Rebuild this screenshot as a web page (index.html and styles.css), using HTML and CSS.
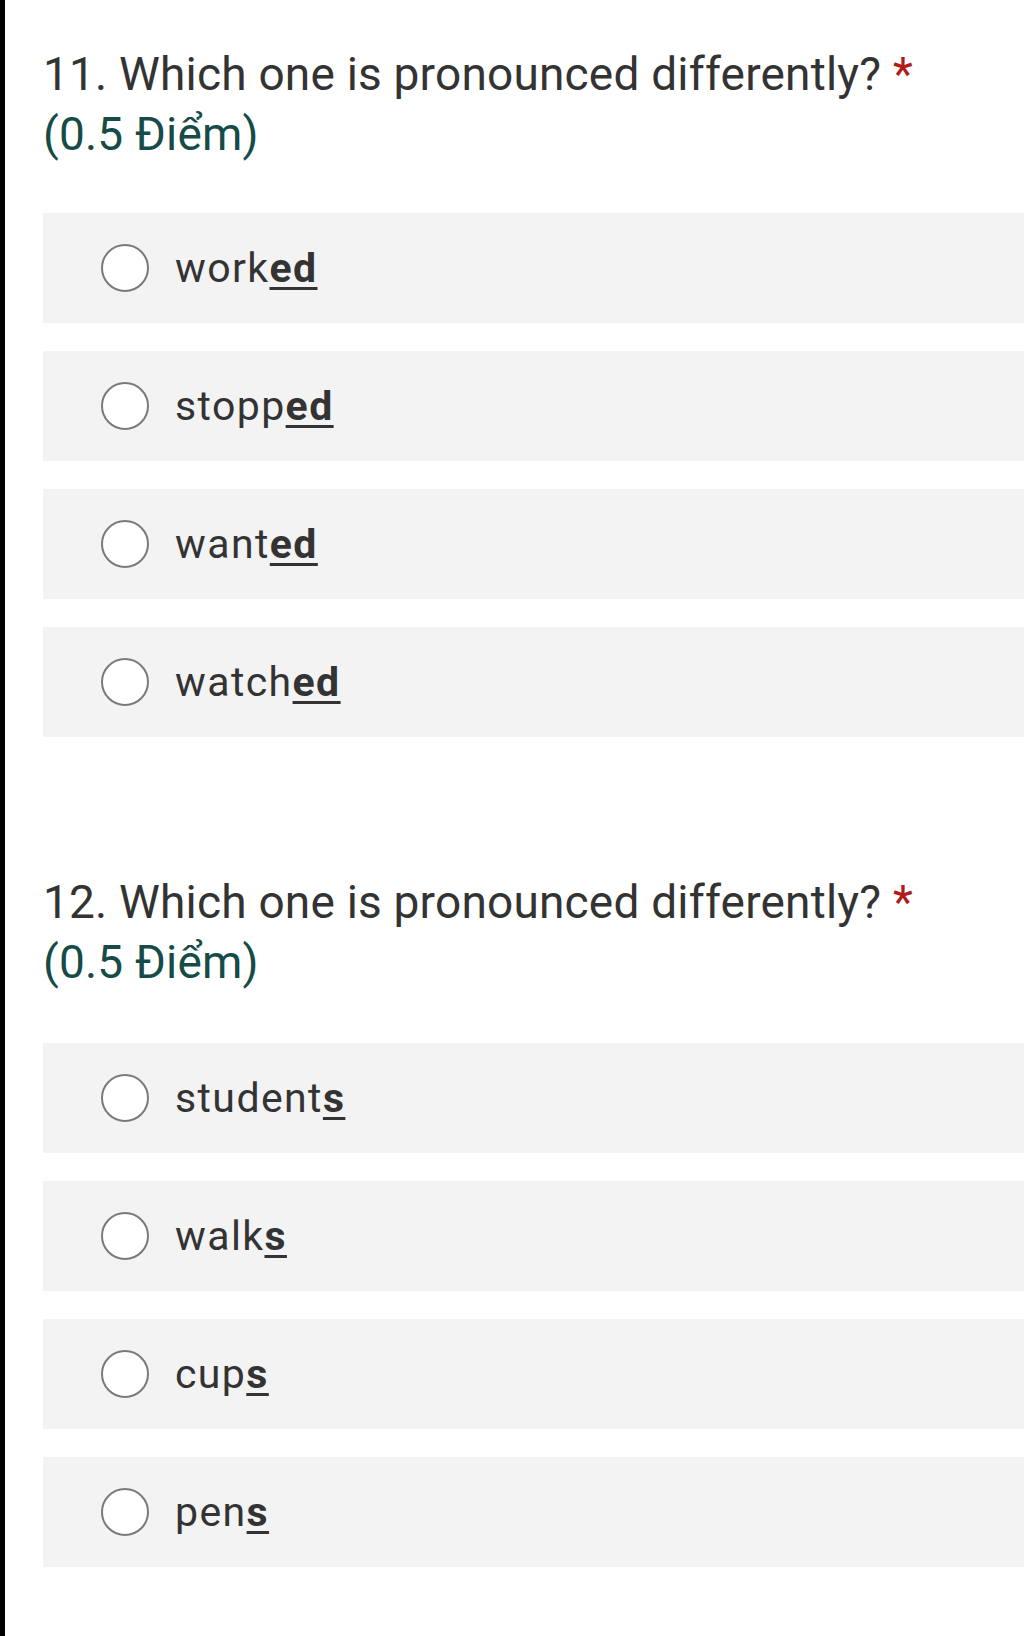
FILE: index.html
```html
<!DOCTYPE html>
<html lang="vi">
<head>
<meta charset="utf-8">
<title>Quiz</title>
<link rel="stylesheet" href="styles.css">
</head>
<body>
<main class="page">
  <section class="question q11">
    <h2 class="q-title">11. Which one is pronounced differently? <span class="req">*</span><br><span class="score">(0.5 Điểm)</span></h2>
    <div class="options">
      <label class="option"><span class="radio"></span><span class="label">work<u>ed</u></span></label>
      <label class="option"><span class="radio"></span><span class="label">stopp<u>ed</u></span></label>
      <label class="option"><span class="radio"></span><span class="label">want<u>ed</u></span></label>
      <label class="option"><span class="radio"></span><span class="label">watch<u>ed</u></span></label>
    </div>
  </section>
  <section class="question q12">
    <h2 class="q-title">12. Which one is pronounced differently? <span class="req">*</span><br><span class="score">(0.5 Điểm)</span></h2>
    <div class="options">
      <label class="option"><span class="radio"></span><span class="label">student<u>s</u></span></label>
      <label class="option"><span class="radio"></span><span class="label">walk<u>s</u></span></label>
      <label class="option"><span class="radio"></span><span class="label">cup<u>s</u></span></label>
      <label class="option"><span class="radio"></span><span class="label">pen<u>s</u></span></label>
    </div>
  </section>
</main>
</body>
</html>
```
FILE: styles.css
```css
html, body {
  margin: 0;
  padding: 0;
  background: #ffffff;
}
body {
  font-family: Roboto, "Noto Sans", "Liberation Sans", sans-serif;
  color: #323130;
  border-left: 5px solid #000000;
  min-height: 1636px;
  box-sizing: border-box;
}
.page {
  padding: 44px 0 0 38px;
}
.question {
  display: flex;
  flex-direction: column;
  gap: 49px;
}
.q12 {
  margin-top: 135px;
  gap: 51px;
}
.q-title {
  margin: 0;
  font-size: 46px;
  font-weight: 400;
  line-height: 60px;
  letter-spacing: 0.2px;
  color: #333333;
}
.req {
  color: #b01a1a;
  font-size: 46px;
}
.score {
  color: #164b47;
}
.options {
  display: flex;
  flex-direction: column;
  gap: 28px;
}
.option {
  display: flex;
  align-items: center;
  height: 110px;
  background: #f3f3f3;
  padding-left: 58px;
  box-sizing: border-box;
}
.radio {
  width: 48px;
  height: 48px;
  box-sizing: border-box;
  border: 2.5px solid #7a7a7a;
  border-radius: 50%;
  background: #ffffff;
  flex: none;
}
.label {
  margin-left: 26px;
  font-size: 41px;
  letter-spacing: 1.4px;
  color: #333333;
  line-height: 1;
}
.label u {
  font-weight: 700;
  text-decoration-thickness: 3px;
  text-underline-offset: 5px;
}
```
